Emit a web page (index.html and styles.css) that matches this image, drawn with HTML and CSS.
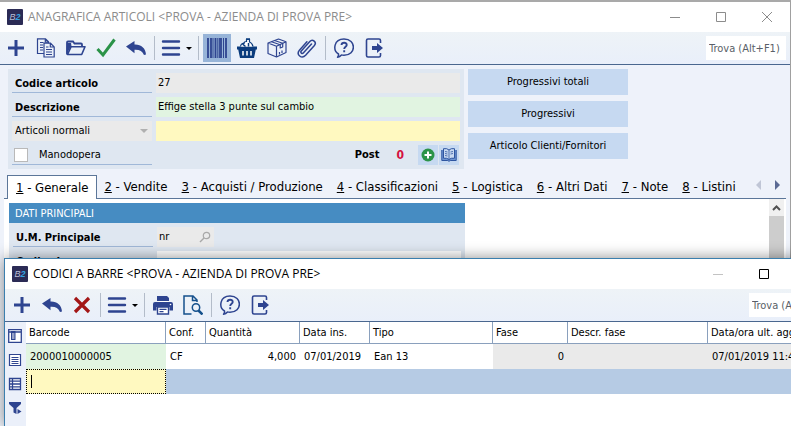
FILE: index.html
```html
<!DOCTYPE html>
<html lang="it">
<head>
    <meta charset="UTF-8">
    <meta name="viewport" content="width=device-width, initial-scale=1.0">
    <title>Anagrafica articoli</title>
    <link rel="stylesheet" href="styles.css">
</head>
<body>
    <!-- icone condivise dalle due finestre -->
    <svg class="sprite" aria-hidden="true">
        <symbol id="i-plus" viewBox="0 0 20 20">
            <path d="M10 2v16M2 10h16" fill="none" stroke="#2e4490" stroke-width="3"/>
        </symbol>
        <symbol id="i-copy" viewBox="0 0 20 20">
            <g fill="none" stroke="#2e4490" stroke-width="1.200">
                <path d="M8 15.500H1.500V.8h8l3 3v1.500M9.300.8v3.300h3M4 4.500h3.500M4 7h3M4 9.500h3M4 12h3"/>
                <path d="M8 5.200h6.500l3.700 3.800v10H8zM14.300 5.300V9H18M10 9h2.500M10 11.500h6M10 14h6M10 16.500h6"/>
            </g>
        </symbol>
        <symbol id="i-folder" viewBox="0 0 20 20">
            <path d="M1 16.500V4.500q0-1 1-1h5l1.500 2h6.500q1 0 1 1V9" fill="none" stroke="#2e4490" stroke-width="1.800"/>
            <path d="M1.500 16.500 5 8.800h14l-3.300 7.700z" fill="none" stroke="#2e4490" stroke-width="1.600" stroke-linejoin="round"/>
            <path d="M.5 16 1 5h4l.5 3z" fill="#2e4490"/>
        </symbol>
        <symbol id="i-check" viewBox="0 0 20 20">
            <path d="M1.500 11 7 17 18.500 1.500" fill="none" stroke="#2b9348" stroke-width="3"/>
        </symbol>
        <symbol id="i-undo" viewBox="0 0 20 20">
            <path d="M0 8.500 8.500 3v3.500c6.500-.3 11 3.500 11.500 10l-2 .5c-1.500-3.800-4.500-5.500-9.500-5.200v3.400z" fill="#2e4490"/>
        </symbol>
        <symbol id="i-menu" viewBox="0 0 20 20">
            <path d="M2 3.500h16M2 10h16M2 16.500h16" stroke="#2e4490" stroke-width="2.400" stroke-linecap="round"/>
        </symbol>
        <symbol id="i-barcode" viewBox="0 0 20 20">
            <path d="M1 0v20M4 0v20M8.500 0v20M14 0v20M19 0v20" stroke="#2e4490" stroke-width="1.800"/>
            <path d="M6 0v20M10.800 0v20M12.400 0v20M16.500 0v20" stroke="#2e4490" stroke-width="1"/>
        </symbol>
        <symbol id="i-basket" viewBox="0 0 20 20">
            <path d="M0 8.500h20v3h-1.200L17 20H3l-1.800-8.500H0z" fill="#0b3c7d"/>
            <path d="M6 13v4.500M10 13v4.500M14 13v4.500" stroke="#fff" stroke-width="1.500"/>
            <path d="M3.500 8.500c.3-2.500 2-3.500 3.500-3 0-1.500 1-2 2.500-2V1.500h3V4c2 .6 3 2.500 3.500 4.500" fill="#fff" stroke="#0b3c7d" stroke-width="1.200"/>
            <path d="M9 1h4M5.500 6l3 2.500M11.500 5v3.500" stroke="#0b3c7d" stroke-width="1.500"/>
        </symbol>
        <symbol id="i-box" viewBox="0 0 20 20">
            <g fill="none" stroke="#2e4490" stroke-width="1.200" stroke-linejoin="round">
                <path d="M1 5 11.500 1 19 3.800v10.700L9.500 19 1 15.500zM1 5l8.500 3.200L19 3.800M9.500 8.200V19"/>
                <path d="m4.500 3.700 8.700 3V10l2.500-1V5.300L7.500 2.500M12.500 14v2.500M15 12.500V15"/>
            </g>
        </symbol>
        <symbol id="i-clip" viewBox="0 0 20 20">
            <path d="m14.500 6-8 8.800c-1.500 1.600-3.500-.3-2.200-1.800l8.500-9.500c2.800-3 7.300.8 4.600 4l-8.800 9.800c-4 4.200-9.700-.8-6.200-5l7.500-8.500" fill="none" stroke="#2e4490" stroke-width="1.500" stroke-linecap="round"/>
        </symbol>
        <symbol id="i-help" viewBox="0 0 20 20">
            <path d="M3.500 19.200c1-1 1.200-2 1-3.200C-1.500 12.300-.3 1 10 1c12.500 0 12.500 16.200 0 16.200-1 0-1.700 0-2.500-.3-1.200 1.300-2.500 2-4 2.300z" fill="none" stroke="#2e4490" stroke-width="1.500" stroke-linejoin="round"/>
            <path d="M7.500 7c.2-3 5.300-3 5.200 0 0 1.800-2.500 1.700-2.500 4M10.200 12.300v2" fill="none" stroke="#2e4490" stroke-width="1.900"/>
        </symbol>
        <symbol id="i-exit" viewBox="0 0 20 20">
            <path d="M16.500 5V2.500Q16.500 1 15 1H4Q2.500 1 2.500 2.500v15Q2.500 19 4 19h11q1.500 0 1.500-1.500V15" fill="none" stroke="#2e4490" stroke-width="1.600"/>
            <path d="M8 8h5V5l6 5-6 5v-3H8z" fill="#2e4490"/>
        </symbol>
        <symbol id="i-delete" viewBox="0 0 20 20">
            <path d="m3 3 14 14M17 3 3 17" stroke="#a31616" stroke-width="3.200"/>
        </symbol>
        <symbol id="i-print" viewBox="0 0 20 20">
            <path d="M4 1h10l2 2v3H4zM2 7h16q2 0 2 2v6.500h-3.500V12h-13v3.500H0V9q0-2 2-2z" fill="#2e4490"/>
            <path d="M4.500 12h11v7h-11z" fill="#fff" stroke="#2e4490" stroke-width="1.400"/>
            <path d="M6.500 14.300h7M6.500 16.700h4" stroke="#2e4490" stroke-width="1.200"/>
            <path d="M4.500 6.500h11" stroke="#fff"/><circle cx="17.500" cy="9.500" r=".8" fill="#fff"/>
        </symbol>
        <symbol id="i-preview" viewBox="0 0 20 20">
            <path d="M8.500 19H1V1h9l4 4v2M9.500 1v4.500H14" fill="none" stroke="#14508c" stroke-width="1.500"/>
            <circle cx="13" cy="12.500" r="3.700" fill="none" stroke="#14508c" stroke-width="1.500"/>
            <path d="m15.500 15.500 4 4" stroke="#14508c" stroke-width="2.500"/>
        </symbol>
        <symbol id="i-min" viewBox="0 0 12 12"><path d="M1 6.500h10" stroke="currentColor"/></symbol>
        <symbol id="i-max" viewBox="0 0 12 12"><path d="M1.500 1.500h9v9h-9z" fill="none" stroke="currentColor"/></symbol>
        <symbol id="i-close" viewBox="0 0 12 12"><path d="m1 1 10 10M11 1 1 11" stroke="currentColor"/></symbol>
    </svg>

    <div class="window main">
        <div class="titlebar">
            <span class="logo">B<i>2</i></span>
            <span class="title">ANAGRAFICA ARTICOLI &lt;PROVA - AZIENDA DI PROVA PRE&gt;</span>
            <button class="winbtn" aria-label="Riduci"><svg><use href="#i-min"/></svg></button>
            <button class="winbtn" aria-label="Ingrandisci"><svg><use href="#i-max"/></svg></button>
            <button class="winbtn" aria-label="Chiudi"><svg><use href="#i-close"/></svg></button>
        </div>
        <div class="toolbar">
            <button aria-label="Nuovo"><svg><use href="#i-plus"/></svg></button>
            <button aria-label="Duplica"><svg><use href="#i-copy"/></svg></button>
            <button aria-label="Apri"><svg><use href="#i-folder"/></svg></button>
            <button aria-label="Salva"><svg><use href="#i-check"/></svg></button>
            <button aria-label="Ripristina"><svg><use href="#i-undo"/></svg></button>
            <span class="sep"></span>
            <button class="drop" aria-label="Menu"><svg><use href="#i-menu"/></svg></button>
            <span class="sep"></span>
            <button class="active" aria-label="Codici a barre"><svg><use href="#i-barcode"/></svg></button>
            <button aria-label="Acquisti"><svg><use href="#i-basket"/></svg></button>
            <button aria-label="Magazzino"><svg><use href="#i-box"/></svg></button>
            <button aria-label="Allegati"><svg><use href="#i-clip"/></svg></button>
            <span class="sep"></span>
            <button aria-label="Aiuto"><svg><use href="#i-help"/></svg></button>
            <button aria-label="Esci"><svg><use href="#i-exit"/></svg></button>
            <input class="search" type="text" placeholder="Trova (Alt+F1)" aria-label="Trova">
        </div>

        <div class="head">
            <div class="panel form">
                <label class="lbl" for="codice">Codice articolo</label>
                <input class="field" id="codice" type="text" value="27">
                <label class="lbl" for="descr">Descrizione</label>
                <input class="field green" id="descr" type="text" value="Effige stella 3 punte sul cambio">
                <div class="tipo">
                    <select id="tipo" aria-label="Tipo articolo">
                        <option>Articoli normali</option>
                    </select>
                </div>
                <input class="field yellow" type="text" aria-label="Descrizione 2">
                <label class="lbl check"><input type="checkbox"> Manodopera</label>
                <div class="post">
                    <b>Post</b>
                    <b class="num">0</b>
                    <button aria-label="Aggiungi post">
                        <svg viewBox="0 0 16 16"><circle cx="8" cy="8" r="6.500" fill="#2b9348"/><path d="M8 4.500v7M4.500 8h7" stroke="#fff" stroke-width="2"/></svg>
                    </button>
                    <button aria-label="Leggi post">
                        <svg viewBox="0 0 16 16"><path d="M.8 3v10.500h6l1.200.8 1.200-.8h6V3" fill="#6f95d2" stroke="#2e55a0"/><path d="M2.500 1.700Q6 1 8 3q2-2 5.500-1.300v9.500Q10 10.700 8 12.500q-2-1.800-5.500-1.300z" fill="#c8d9f1" stroke="#2e55a0"/><path d="M8 3v9.500M4 4.500l2.500.5M4 6.500l2.500.5M4 8.500l2.500.5M9.500 5l2.500-.5M9.500 7l2.500-.5" stroke="#2e55a0" stroke-width=".8"/></svg>
                    </button>
                </div>
            </div>
            <div class="side">
                <button>Progressivi totali</button>
                <button>Progressivi</button>
                <button>Articolo Clienti/Fornitori</button>
            </div>
        </div>

        <div class="tabs">
            <button class="tab on"><u>1</u> - Generale</button>
            <button class="tab"><u>2</u> - Vendite</button>
            <button class="tab"><u>3</u> - Acquisti / Produzione</button>
            <button class="tab"><u>4</u> - Classificazioni</button>
            <button class="tab"><u>5</u> - Logistica</button>
            <button class="tab"><u>6</u> - Altri Dati</button>
            <button class="tab"><u>7</u> - Note</button>
            <button class="tab"><u>8</u> - Listini</button>
            <div class="arrows">
                <button class="prev" aria-label="Schede precedenti"></button>
                <button class="next" aria-label="Schede successive"></button>
            </div>
        </div>
        <div class="page">
            <div class="panel dati">
                <h2>DATI PRINCIPALI</h2>
                <div class="form">
                    <label class="lbl" for="um">U.M. Principale</label>
                    <div class="lookup">
                        <input id="um" type="text" value="nr">
                        <svg viewBox="0 0 12 12"><circle cx="7.500" cy="4.500" r="3.200" fill="none" stroke="#a9a9a9" stroke-width="1.200"/><path d="M5 7 1 11" stroke="#a9a9a9" stroke-width="1.500"/></svg>
                    </div>
                    <label class="lbl" for="iva">Codice Iva</label>
                    <input class="field white" id="iva" type="text">
                </div>
            </div>
            <div class="scroll">
                <svg viewBox="0 0 15 17"><path d="m4 11 3.500-3.500L11 11" fill="none" stroke="#505050" stroke-width="2"/></svg>
            </div>
        </div>
    </div>

    <!-- finestra sovrapposta, esce dal bordo destro -->
    <div class="window codes">
        <div class="titlebar">
            <span class="logo">B<i>2</i></span>
            <span class="title">CODICI A BARRE &lt;PROVA - AZIENDA DI PROVA PRE&gt;</span>
            <button class="winbtn off" aria-label="Riduci"><svg><use href="#i-min"/></svg></button>
            <button class="winbtn" aria-label="Ingrandisci"><svg><use href="#i-max"/></svg></button>
            <button class="winbtn" aria-label="Chiudi"><svg><use href="#i-close"/></svg></button>
        </div>
        <div class="toolbar">
            <button aria-label="Nuovo"><svg><use href="#i-plus"/></svg></button>
            <button aria-label="Ripristina"><svg><use href="#i-undo"/></svg></button>
            <button aria-label="Elimina"><svg><use href="#i-delete"/></svg></button>
            <span class="sep"></span>
            <button class="drop" aria-label="Menu"><svg><use href="#i-menu"/></svg></button>
            <span class="sep"></span>
            <button aria-label="Stampa"><svg><use href="#i-print"/></svg></button>
            <button aria-label="Anteprima"><svg><use href="#i-preview"/></svg></button>
            <span class="sep"></span>
            <button aria-label="Aiuto"><svg><use href="#i-help"/></svg></button>
            <button aria-label="Esci"><svg><use href="#i-exit"/></svg></button>
            <input class="search" type="text" placeholder="Trova (Alt+F1)" aria-label="Trova">
        </div>
        <div class="grid">
            <div class="gridbar">
                <button aria-label="Colonne"><svg viewBox="0 0 14 14"><path d="M.7.700h12.600v12.600H.7zM.7 3h12.600" fill="#fff" stroke="#2e4490" stroke-width="1.300"/><path d="M3 2h4.500v9H3z" fill="#2e4490"/><path d="M4 5h2.500M4 7h2.500M4 9h2.500" stroke="#fff"/></svg></button>
                <button aria-label="Scheda"><svg viewBox="0 0 14 14"><path d="M1.500 1.500h11v11h-11z" fill="#fff" stroke="#2e4490" stroke-width="1.200"/><path d="M3.500 4.500h7M3.500 6.500h7M3.500 8.500h7M3.500 10.500h7" stroke="#2e4490"/></svg></button>
                <button aria-label="Elenco"><svg viewBox="0 0 14 14"><path d="M1.500 1.500h11v11h-11zM1 4.200h12M1 7h12M1 9.800h12M4.500 1v12" fill="#fff" stroke="#2e4490" stroke-width="1.300"/></svg></button>
                <button aria-label="Filtro"><svg viewBox="0 0 14 14"><path d="M1 1h12v2L8.500 7v6l-3-1.500V7L1 3z" fill="#2e4490"/><path d="m9.500 8 4 2.500-4 2.500z" fill="#2e4490"/></svg></button>
            </div>
            <table>
                <colgroup>
                    <col class="c-bar"><col class="c-conf"><col class="c-qta"><col class="c-data"><col class="c-tipo"><col class="c-fase"><col class="c-descr"><col>
                </colgroup>
                <tr>
                    <th>Barcode</th><th>Conf.</th><th>Quantità</th><th>Data ins.</th><th>Tipo</th><th>Fase</th><th>Descr. fase</th><th>Data/ora ult. agg.</th>
                </tr>
                <tr>
                    <td class="green">2000010000005</td>
                    <td>CF</td>
                    <td class="r">4,000</td>
                    <td>07/01/2019</td>
                    <td>Ean 13</td>
                    <td class="ro r">0</td>
                    <td class="ro"></td>
                    <td class="ro">07/01/2019 11:48</td>
                </tr>
                <tr class="sel">
                    <td class="edit"><input type="text" aria-label="Barcode"></td>
                    <td></td><td></td><td></td><td></td><td></td><td></td><td></td>
                </tr>
            </table>
        </div>
    </div>
</body>
</html>
```
FILE: styles.css
```css
*{margin: 0;padding: 0;box-sizing: border-box;}
body{
    height: 100vh;
    overflow: hidden;
    position: relative;
    font: 11px/20px "DejaVu Sans Condensed", "DejaVu Sans", sans-serif;
    color: #000;
    background: #eef2fa;
}
button,input,select{font: inherit;color: inherit;border: 0;background: none;border-radius: 0;}
svg{display: block;}
.sprite{display: none;}

/* finestre */
.window{display: flex;flex-direction: column;}
.main{
    min-height: 100vh;
    border-top: 2px solid #a9a9a9;
    border-right: 1px solid #a0a0a0;
    background: #eef2fa;
}
.codes{
    position: absolute;
    left: 4px;
    right: -43px;
    top: 258px;
    bottom: 0;
    border: 1px solid #3b7fae;
    border-bottom: 0;
    background: #fff;
    box-shadow: 0 0 14px rgba(0,0,0,.45);
}
.titlebar{display: flex;align-items: center;height: 30px;background: #fff;padding-left: 7px;}
.logo{
    width: 16px;
    height: 16px;
    border-radius: 1px;
    background: #2b2b55;
    color: #b9bcd4;
    font: italic 9px/16px "Liberation Sans", sans-serif;
    text-align: center;
}
.logo i{color: #35a3e0;font-weight: bold;}
.title{
    flex: 1;
    margin-left: 5px;
    font-family: "Open Sans", sans-serif;
    font-size: 12px;
    white-space: nowrap;
}
.main .titlebar{color: #8c8c8c;}
.winbtn{width: 46px;height: 30px;display: flex;align-items: center;justify-content: center;}
.winbtn svg{width: 12px;height: 12px;}
.off{color: #c3c3c3;}

.toolbar{
    display: flex;
    align-items: center;
    gap: 2px;
    height: 33px;
    padding: 0 4px 0 2px;
    border-bottom: 1px solid #4a678f;
    background: linear-gradient(#eef3f7, #e9effa);
}
.codes .toolbar{padding-left: 3px;}
.toolbar button{width: 28px;height: 28px;display: flex;align-items: center;justify-content: center;flex: none;}
.toolbar svg{width: 20px;height: 20px;}
.toolbar .active{background: #97b4d8;}
.toolbar .drop{width: 35px;gap: 5px;}
.drop::after{content: "";border: 3px solid transparent;border-top-color: #000;border-bottom: 0;}
.sep{width: 1px;height: 24px;margin: 0 2px;background: #b3bcc9;}
.search{margin-left: auto;width: 80px;height: 24px;padding-left: 3px;background: #fff;}
.search::placeholder{color: #5a5f68;opacity: 1;}

/* testata articolo */
.head{display: flex;gap: 4px;padding: 4px 8px 0;}
.panel{width: 456px;background: #dfe7f1;}
.form{display: grid;grid-template-columns: 140px 1fr;grid-auto-rows: 20px;gap: 4px;padding: 4px;}
.lbl{padding: 1px 3px 0;border-bottom: 1px solid #a0b8d8;font-weight: bold;line-height: 20px;}
.field{width: 100%;height: 20px;padding: 0 2px;background: #eaeaea;}
.green{background: #e1f4e1;}
.yellow{background: #fff9c0;}
.white{background: #fff;}
.tipo{position: relative;background: #eaeaea;}
.tipo select{width: 100%;height: 20px;padding-left: 3px;appearance: none;}
.tipo::after{
    content: "";
    position: absolute;
    right: 4px;
    top: 8px;
    border: 4px solid transparent;
    border-top-color: #b0b0b0;
    border-bottom: 0;
}
.check{display: flex;align-items: center;gap: 11px;font-weight: normal;padding: 0 2px;}
.check input{appearance: none;width: 14px;height: 14px;background: #fff;border: 1px solid #b9b9b9;}
.post{display: flex;justify-content: flex-end;align-items: center;gap: 1px;padding-right: 1px;}
.post .num{color: #d4123f;font-size: 12px;margin: 0 13px 0 16px;}
.post button{width: 20px;height: 20px;padding: 2px;background: #c6d9f1;}
.side{display: flex;flex-direction: column;gap: 6px;width: 160px;}
.side button{height: 26px;background: #c6d9f1;}

/* schede */
.tabs{display: flex;align-items: flex-end;height: 30px;margin: 0 4px;padding-left: 3px;border-bottom: 1px solid #5b7699;}
.tab{height: 23px;padding: 0 7px;font-size: 13px;white-space: nowrap;}
.on{height: 24px;margin-bottom: -1px;padding: 0 8px;background: #fff;border: 1px solid #5b7699;border-bottom: 0;}
.arrows{display: flex;gap: 14px;margin-left: auto;padding: 0 6px 8px 0;}
.arrows button{border: 5px solid transparent;}
.arrows .prev{border-left: 0;border-right-color: #c0c6d6;}
.arrows .next{border-right: 0;border-left-color: #5b6a94;}
.page{flex: 1;display: flex;margin: 0 4px;padding-left: 5px;background: #fff;}
.dati{margin-top: 4px;}
.dati h2{height: 20px;padding-left: 6px;background: #468cc2;color: #fff;font-size: 11px;font-weight: normal;line-height: 22px;}
.lookup{display: flex;align-items: center;width: 57px;padding-right: 3px;background: #eaeaea;}
.lookup input{width: 42px;padding-left: 2px;}
.lookup svg{width: 12px;height: 12px;flex: none;}
.scroll{width: 15px;margin: 0 2px 0 auto;background: #cdcdcd;}
.scroll svg{width: 15px;height: 17px;background: #f0f0f0;}

/* griglia codici a barre */
.grid{flex: 1;display: flex;align-items: flex-start;}
.gridbar{align-self: stretch;width: 21px;padding: 7px 3px;display: flex;flex-direction: column;gap: 10px;background: #ebf0fa;}
.gridbar button{width: 14px;height: 14px;}
table{flex: 1;table-layout: fixed;border-collapse: separate;border-spacing: 0;}
th{
    height: 22px;
    padding: 0 3px;
    border-right: 1px solid #8aa0bd;
    border-bottom: 1px solid #8aa0bd;
    font-weight: normal;
    text-align: left;
    white-space: nowrap;
}
td{height: 25px;padding: 0 4px;white-space: nowrap;}
.r{text-align: right;}
.ro{background: #eaeaea;}
.sel td{background: #b6cbe4;}
.sel .edit{padding: 0;background: #fff9c0;}
.edit input{
    width: 100%;
    height: 25px;
    padding-left: 2px;
    border: 1px dotted #000;
    outline: 0;
    display: block;
    background: linear-gradient(#000, #000) 4px center / 1px 13px no-repeat;
}
.c-bar{width: 140px;}
.c-conf{width: 40px;}
.c-qta{width: 94px;}
.c-data{width: 70px;}
.c-tipo{width: 123px;}
.c-fase{width: 75px;}
.c-descr{width: 140px;}
```
